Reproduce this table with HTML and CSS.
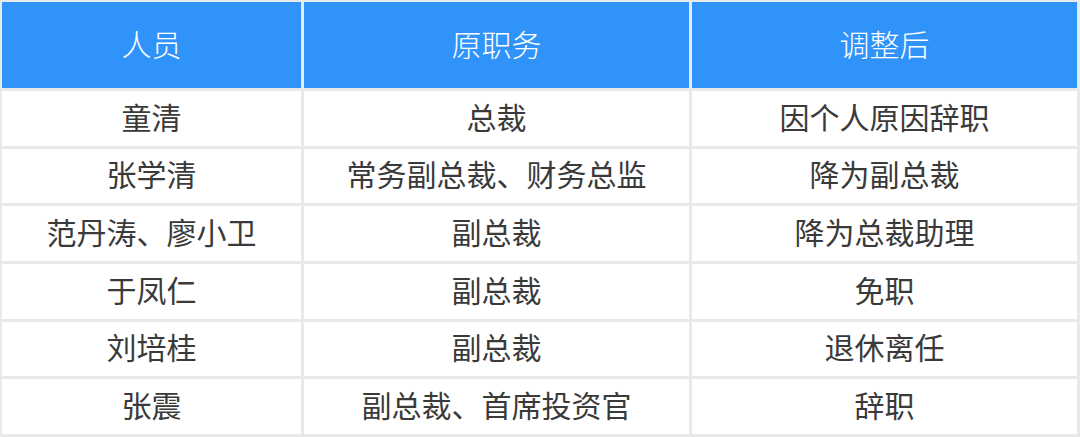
FILE: index.html
```html
<!DOCTYPE html>
<html lang="zh-CN">
<head>
<meta charset="utf-8">
<title>人员调整</title>
<link rel="stylesheet" href="styles.css">
</head>
<body>
<div class="table">
  <div class="cell head">人员</div>
  <div class="cell head">原职务</div>
  <div class="cell head">调整后</div>

  <div class="cell">童清</div>
  <div class="cell">总裁</div>
  <div class="cell">因个人原因辞职</div>

  <div class="cell">张学清</div>
  <div class="cell">常务副总裁、财务总监</div>
  <div class="cell">降为副总裁</div>

  <div class="cell">范丹涛、廖小卫</div>
  <div class="cell">副总裁</div>
  <div class="cell">降为总裁助理</div>

  <div class="cell">于凤仁</div>
  <div class="cell">副总裁</div>
  <div class="cell">免职</div>

  <div class="cell">刘培桂</div>
  <div class="cell">副总裁</div>
  <div class="cell">退休离任</div>

  <div class="cell">张震</div>
  <div class="cell">副总裁、首席投资官</div>
  <div class="cell">辞职</div>
</div>
</body>
</html>
```
FILE: styles.css
```css
html, body {
  margin: 0;
  padding: 0;
  background: #ffffff;
}

.table {
  box-sizing: border-box;
  width: 1080px;
  height: 437px;
  padding: 2px 3px 3px 2px;
  display: grid;
  grid-template-columns: 299px 385px 385px;
  grid-template-rows: 86px repeat(6, 1fr);
  gap: 3px;
  background: #e8e9ea;
  font-family: "Noto Sans CJK SC", "Noto Sans", sans-serif;
  font-size: 30px;
  line-height: 1;
}

.cell {
  box-sizing: border-box;
  display: flex;
  align-items: center;
  justify-content: center;
  padding-bottom: 5px;
  background: #ffffff;
  color: #3a3a3a;
}

.cell.head {
  background: #3093f9;
  color: #ffffff;
  font-weight: 300;
}
```
